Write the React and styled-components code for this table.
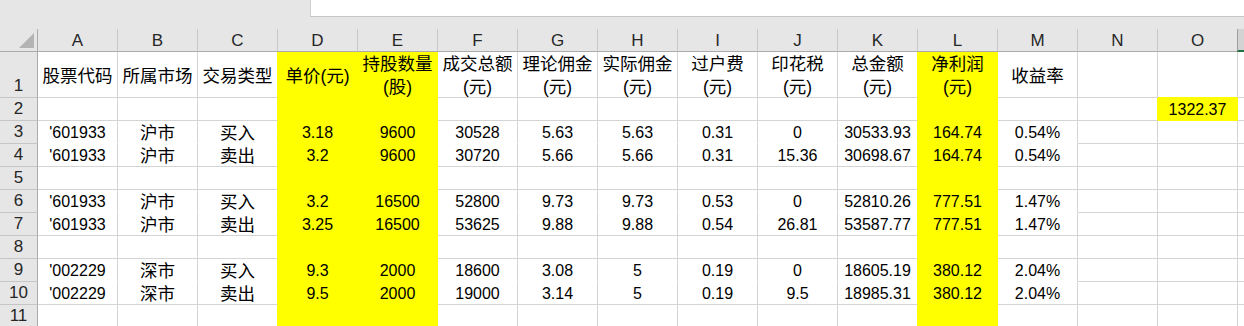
import React from "react";
import styled, { createGlobalStyle } from "styled-components";

const YELLOW = "#ffff00";
const GRID = "#d4d4d4";
const HEAD_BG = "#e6e6e6";
const HEAD_LINE = "#ababab";

const COLS = ["A", "B", "C", "D", "E", "F", "G", "H", "I", "J", "K", "L", "M", "N", "O"];
const YELLOW_COLS = [3, 4, 11];
const NO_SPLIT_ROWS = [3, 6, 9]; // rows with no gridline beneath in A..M

const ROWS = [
	{ n: 1, tall: true, cells: ["股票代码", "所属市场", "交易类型", "单价(元)", "持股数量\n(股)", "成交总额\n(元)", "理论佣金\n(元)", "实际佣金\n(元)", "过户费\n(元)", "印花税\n(元)", "总金额\n(元)", "净利润\n(元)", "收益率", "", ""] },
	{ n: 2, cells: ["", "", "", "", "", "", "", "", "", "", "", "", "", "", "1322.37"] },
	{ n: 3, cells: ["'601933", "沪市", "买入", "3.18", "9600", "30528", "5.63", "5.63", "0.31", "0", "30533.93", "164.74", "0.54%", "", ""] },
	{ n: 4, cells: ["'601933", "沪市", "卖出", "3.2", "9600", "30720", "5.66", "5.66", "0.31", "15.36", "30698.67", "164.74", "0.54%", "", ""] },
	{ n: 5, cells: [] },
	{ n: 6, cells: ["'601933", "沪市", "买入", "3.2", "16500", "52800", "9.73", "9.73", "0.53", "0", "52810.26", "777.51", "1.47%", "", ""] },
	{ n: 7, cells: ["'601933", "沪市", "卖出", "3.25", "16500", "53625", "9.88", "9.88", "0.54", "26.81", "53587.77", "777.51", "1.47%", "", ""] },
	{ n: 8, cells: [] },
	{ n: 9, cells: ["'002229", "深市", "买入", "9.3", "2000", "18600", "3.08", "5", "0.19", "0", "18605.19", "380.12", "2.04%", "", ""] },
	{ n: 10, cells: ["'002229", "深市", "卖出", "9.5", "2000", "19000", "3.14", "5", "0.19", "9.5", "18985.31", "380.12", "2.04%", "", ""] },
	{ n: 11, cells: [] },
];

function isFilled(rowNo, col) {
	if (YELLOW_COLS.includes(col)) return true;
	return rowNo === 2 && col === 14;
}

function borders(rowNo, col) {
	const filled = isFilled(rowNo, col);
	const right = filled || (col < 14 && isFilled(rowNo, col + 1)) ? YELLOW : GRID;
	let bottom = GRID;
	if (filled || isFilled(rowNo + 1, col)) bottom = YELLOW;
	else if (NO_SPLIT_ROWS.includes(rowNo) && col <= 12) bottom = "#ffffff";
	return { right, bottom };
}

const GlobalStyle = createGlobalStyle`
	html, body {
		margin: 0;
		padding: 0;
		background: #ffffff;
		overflow: hidden;
	}
`;

const Sheet = styled.div`
	width: 1244px;
	height: 326px;
	overflow: hidden;
	background: ${HEAD_BG};
	font-family: "Liberation Sans", "Noto Sans CJK SC", sans-serif;
	color: #000;
`;

const TopBar = styled.div`
	height: 29px;
	display: flex;
	padding-left: 310px;
	box-sizing: border-box;
`;

const FormulaBox = styled.div`
	flex: 1;
	height: 17px;
	box-sizing: border-box;
	background: #ffffff;
	border-left: 1px solid #d0d0d0;
	border-bottom: 1px solid #c6c6c6;
`;

const Row = styled.div`
	display: flex;
	height: ${(p) => p.$h}px;
`;

const Corner = styled.div`
	width: 38px;
	flex: none;
	box-sizing: border-box;
	border-right: 1px solid ${HEAD_LINE};
	border-bottom: 1px solid ${HEAD_LINE};
	display: flex;
	justify-content: flex-end;
	align-items: flex-end;
	padding: 0 3px 3px 0;
`;

const Triangle = styled.div`
	width: 15px;
	height: 15px;
	background: #b4b4b4;
	clip-path: polygon(100% 0, 100% 100%, 0 100%);
`;

const ColHead = styled.div`
	width: 80px;
	flex: none;
	box-sizing: border-box;
	border-right: 1px solid #c8c8c8;
	border-bottom: 1px solid ${HEAD_LINE};
	display: flex;
	align-items: center;
	justify-content: center;
	font-size: 17px;
	color: #262626;
	padding-top: 1px;
`;

const SelectedHead = styled.div`
	flex: 1;
	box-sizing: border-box;
	background: #d3d3d3;
	border-left: 1px solid #9e9e9e;
	border-bottom: 2px solid #217346;
	margin-left: -1px;
`;

const RowHead = styled.div`
	width: 38px;
	flex: none;
	box-sizing: border-box;
	background: ${HEAD_BG};
	border-right: 1px solid ${HEAD_LINE};
	border-bottom: 1px solid #c6c6c6;
	display: flex;
	align-items: flex-end;
	justify-content: center;
	padding-bottom: 1px;
	font-size: 17px;
	line-height: 20px;
	color: #262626;
`;

const Cell = styled.div`
	width: 80px;
	flex: none;
	box-sizing: border-box;
	background: ${(p) => (p.$fill ? YELLOW : "#ffffff")};
	border-right: 1px solid ${(p) => p.$right};
	border-bottom: 1px solid ${(p) => p.$bottom};
	display: flex;
	align-items: center;
	justify-content: center;
	text-align: center;
	white-space: pre-line;
	font-size: ${(p) => (p.$cjk ? "17.5px" : "16px")};
	line-height: ${(p) => (p.$tall ? "23px" : "20px")};
	padding-top: ${(p) => (p.$tall ? "3px" : "1px")};
	overflow: visible;
`;

const Rest = styled.div`
	flex: 1;
	background: #ffffff;
	border-bottom: 1px solid ${GRID};
`;

const CJK = /[\u4e00-\u9fff]/;

function SheetRow({ row }) {
	return (
		<Row $h={row.tall ? 46 : 23}>
			<RowHead>{row.n}</RowHead>
			{COLS.map((c, i) => {
				const text = row.cells[i] || "";
				const b = borders(row.n, i);
				return (
					<Cell
						key={c}
						$fill={isFilled(row.n, i)}
						$right={b.right}
						$bottom={b.bottom}
						$cjk={CJK.test(text)}
						$tall={row.tall}
					>
						{text}
					</Cell>
				);
			})}
			<Rest />
		</Row>
	);
}

export default function App() {
	return (
		<Sheet>
			<GlobalStyle />
			<TopBar>
				<FormulaBox />
			</TopBar>
			<Row $h={23}>
				<Corner>
					<Triangle />
				</Corner>
				{COLS.map((c) => (
					<ColHead key={c}>{c}</ColHead>
				))}
				<SelectedHead />
			</Row>
			{ROWS.map((row) => (
				<SheetRow key={row.n} row={row} />
			))}
		</Sheet>
	);
}
